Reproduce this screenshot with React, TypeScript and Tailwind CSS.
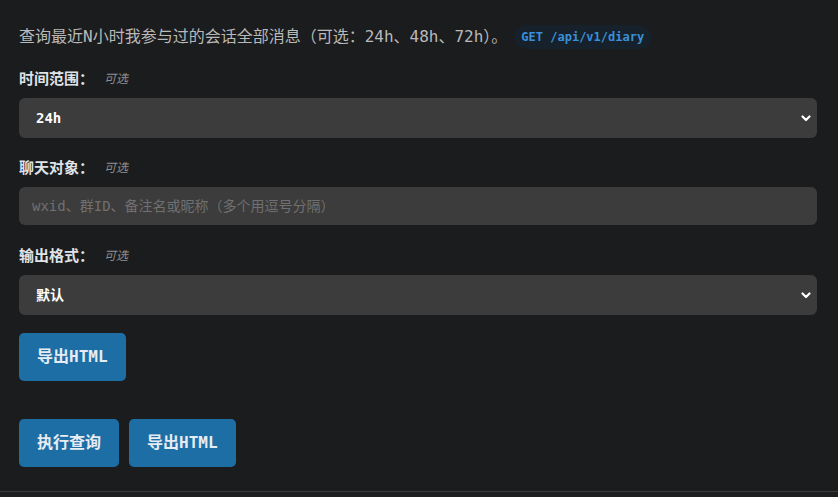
import React, { useState } from 'react';

const fontStack = { fontFamily: '"DejaVu Sans Mono", "Noto Sans CJK SC", monospace' };

const Chevron: React.FC = () => (
  <svg
    className="pointer-events-none absolute right-[5px] top-1/2 -translate-y-1/2"
    width="12"
    height="12"
    viewBox="0 0 12 12"
    fill="none"
  >
    <path d="M2.5 4.5 L6 8 L9.5 4.5" stroke="#ffffff" strokeWidth="2.2" strokeLinecap="round" strokeLinejoin="round" />
  </svg>
);

const FieldLabel: React.FC<{ text: string }> = ({ text }) => (
  <div className="flex items-center h-5 mb-[9px]">
    <span className="text-[15px] leading-5 font-bold text-[#dfe3e8]">{text}</span>
    <span className="ml-[10px] text-[12px] leading-5 italic text-[#8f8f8f]">可选</span>
  </div>
);

const App: React.FC = () => {
  const [range, setRange] = useState('24h');
  const [target, setTarget] = useState('');
  const [format, setFormat] = useState('default');

  return (
    <div className="min-h-screen bg-[#1b1c1e] flex flex-col" style={fontStack}>
      <div className="pl-[19px] pr-[21px] pt-[25px]">
        {/* Description */}
        <div className="flex items-center h-6 mb-5">
          <span className="text-[16px] text-[#b9b9b9]">
            查询最近N小时我参与过的会话全部消息（可选：24h、48h、72h）。
          </span>
          <span className="ml-[7px] h-6 px-[7px] flex items-center rounded-full bg-[#16212b] text-[12px] font-bold text-[#3a90d8]">
            GET /api/v1/diary
          </span>
        </div>

        {/* Time range */}
        <div className="mb-5">
          <FieldLabel text="时间范围：" />
          <div className="relative">
            <select
              value={range}
              onChange={(e) => setRange(e.target.value)}
              className="w-full h-10 appearance-none rounded-[6px] bg-[#3c3c3c] pl-[17px] text-[14px] font-bold text-white outline-none"
              style={fontStack}
            >
              <option value="24h">24h</option>
              <option value="48h">48h</option>
              <option value="72h">72h</option>
            </select>
            <Chevron />
          </div>
        </div>

        {/* Chat target */}
        <div className="mb-[21px]">
          <FieldLabel text="聊天对象：" />
          <input
            value={target}
            onChange={(e) => setTarget(e.target.value)}
            placeholder="wxid、群ID、备注名或昵称（多个用逗号分隔）"
            className="w-full h-[38px] rounded-[6px] bg-[#3c3c3c] px-[13px] text-[14px] text-white placeholder:text-[#707070] outline-none"
            style={fontStack}
          />
        </div>

        {/* Output format */}
        <div className="mb-[18px]">
          <FieldLabel text="输出格式：" />
          <div className="relative">
            <select
              value={format}
              onChange={(e) => setFormat(e.target.value)}
              className="w-full h-10 appearance-none rounded-[6px] bg-[#3c3c3c] pl-[17px] text-[14px] font-bold text-white outline-none"
              style={fontStack}
            >
              <option value="default">默认</option>
              <option value="html">HTML</option>
              <option value="json">JSON</option>
            </select>
            <Chevron />
          </div>
        </div>

        <button className="h-12 px-[18px] rounded-[5px] bg-[#1e6ea6] text-[16px] font-bold text-[#e6ecf2]">
          导出HTML
        </button>

        {/* Actions */}
        <div className="flex gap-[10px] mt-[38px]">
          <button className="h-12 px-[18px] rounded-[5px] bg-[#1e6ea6] text-[16px] font-bold text-[#e6ecf2]">
            执行查询
          </button>
          <button className="h-12 px-[18px] rounded-[5px] bg-[#1e6ea6] text-[16px] font-bold text-[#e6ecf2]">
            导出HTML
          </button>
        </div>
      </div>

      <div className="mt-6 flex-1 border-t border-[#3a3a3a] bg-[#1d1e20]" />
    </div>
  );
};

export default App;
